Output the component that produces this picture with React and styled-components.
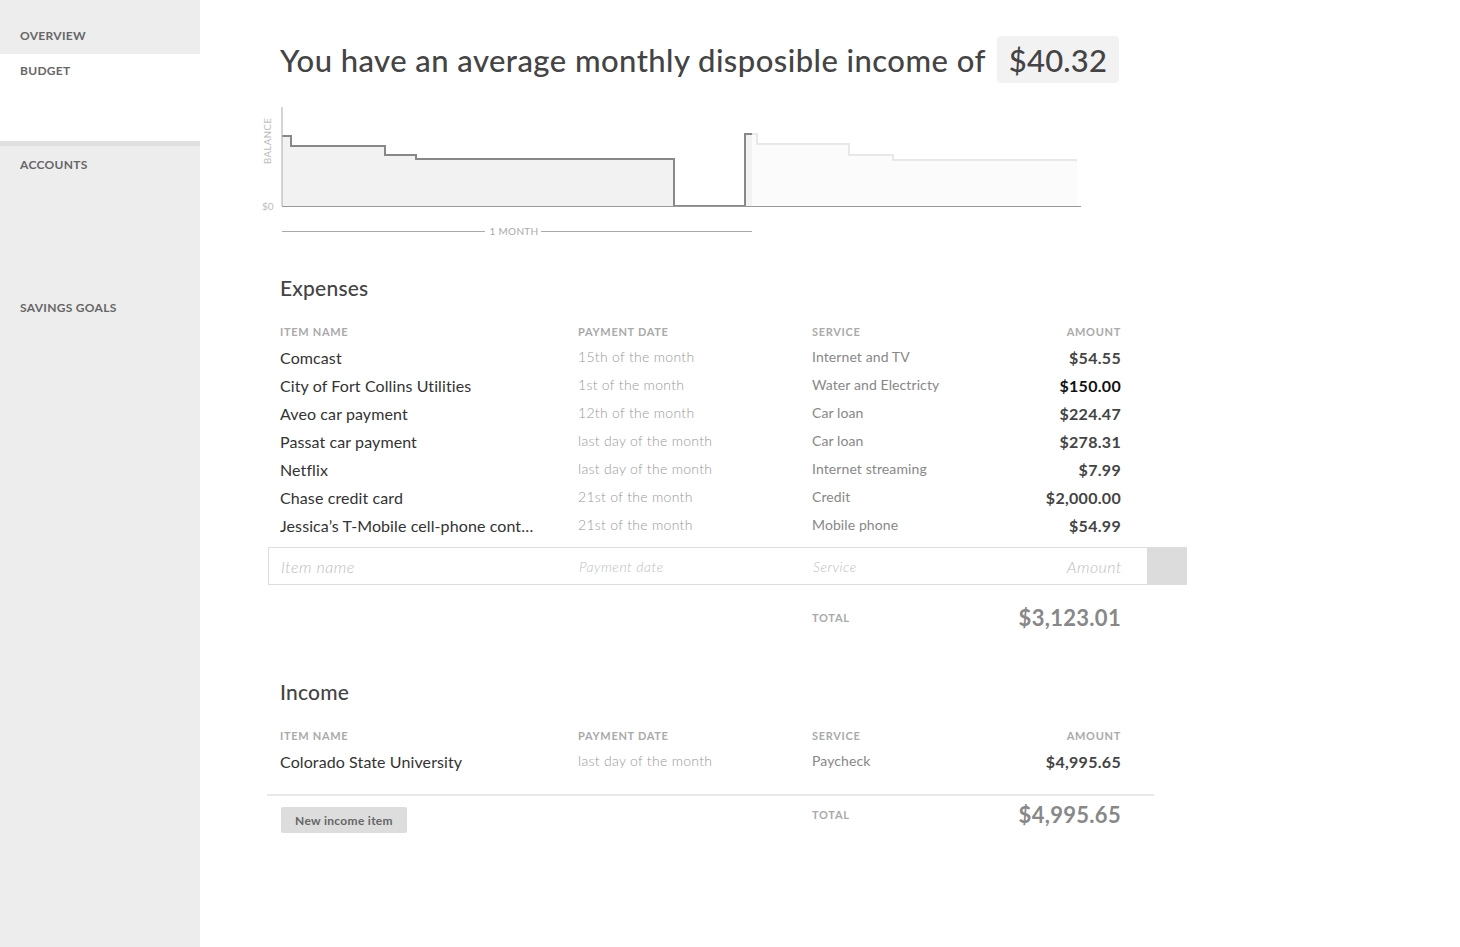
import React from "react";
import styled, { createGlobalStyle } from "styled-components";

const GlobalStyle = createGlobalStyle`
  html, body {
    margin: 0;
    padding: 0;
    background: #fff;
    font-family: Lato, "Open Sans", "Liberation Sans", sans-serif;
    color: #444;
  }
`;

const Page = styled.div`
  display: flex;
  min-height: 947px;
`;

const Sidebar = styled.nav`
  width: 200px;
  flex-shrink: 0;
  background: #ededed;
  display: flex;
  flex-direction: column;
`;

const NavItem = styled.div`
  padding: ${(p) => p.$pad || "0 20px"};
  height: ${(p) => p.$height || "auto"};
  background: ${(p) => (p.$active ? "#fff" : "transparent")};
  border-bottom: ${(p) => (p.$active ? "5px solid #e0e0e0" : "none")};
  font-size: 12px;
  font-weight: 700;
  letter-spacing: 0.3px;
  color: #666;
  box-sizing: border-box;
`;

const Main = styled.main`
  flex: 1;
  padding: 36px 0 0 80px;
`;

const Header = styled.div`
  display: flex;
  align-items: center;
  gap: 11px;
  height: 47px;
`;

const Title = styled.h1`
  margin: 0;
  font-size: 31px;
  font-weight: 500;
  color: #444;
  letter-spacing: 0.45px;
`;

const Figure = styled.div`
  background: #f2f2f2;
  border-radius: 4px;
  padding: 0 12px;
  height: 47px;
  display: flex;
  align-items: center;
  font-size: 31px;
  font-weight: 500;
  color: #444;
  letter-spacing: 0.2px;
`;

const Chart = styled.svg`
  display: block;
  margin: 17px 0 0 -30px;
`;

const Section = styled.section`
  margin-top: ${(p) => p.$top || "0"};
  width: 841px;
`;

const SectionTitle = styled.h2`
  margin: 0 0 18px;
  font-size: 21px;
  font-weight: 500;
  color: #444;
  line-height: 24px;
  letter-spacing: 0.2px;
`;

const Row = styled.div`
  display: grid;
  grid-template-columns: 298px 234px 1fr 140px;
  align-items: center;
  height: ${(p) => p.$h || "28px"};
`;

const HeadCell = styled.div`
  font-size: 11px;
  font-weight: 700;
  color: #aaa;
  letter-spacing: 0.7px;
  text-align: ${(p) => (p.$right ? "right" : "left")};
`;

const NameCell = styled.div`
  font-size: 16px;
  color: #333;
  letter-spacing: 0.1px;
  white-space: nowrap;
  overflow: hidden;
  text-overflow: ellipsis;
  padding-right: 44px;
  margin-top: -2px;
`;

const DateCell = styled.div`
  font-size: 14px;
  font-weight: 300;
  color: #999;
  letter-spacing: 0.3px;
  margin-top: -4px;
`;

const ServiceCell = styled.div`
  font-size: 14px;
  color: #888;
  font-weight: 400;
  letter-spacing: 0.1px;
  margin-top: -3px;
`;

const AmountCell = styled.div`
  font-size: 16px;
  font-weight: 700;
  letter-spacing: 0.3px;
  color: ${(p) => (p.$strong ? "#111" : "#444")};
  text-align: right;
  margin-top: -1px;
`;

const InputRow = styled.div`
  display: flex;
  margin: 7px 0 0 -12px;
  width: 919px;
  height: 38px;
  border: 1px solid #ddd;
  box-sizing: border-box;
`;

const InputGrid = styled.div`
  flex: 1;
  display: grid;
  grid-template-columns: 298px 234px 1fr 140px;
  align-items: center;
  padding-left: 12px;
  padding-right: 25px;
`;

const Placeholder = styled.div`
  font-style: italic;
  font-weight: 300;
  color: #bdbdbd;
  font-size: ${(p) => p.$size || "14px"};
  letter-spacing: 0.5px;
  text-align: ${(p) => (p.$right ? "right" : "left")};
`;

const AddSquare = styled.div`
  width: 39px;
  background: #dcdcdc;
`;

const TotalRow = styled.div`
  display: grid;
  grid-template-columns: 298px 234px 1fr 140px;
  align-items: center;
  height: ${(p) => p.$h || "40px"};
  margin-top: ${(p) => p.$top || "0"};
`;

const TotalLabel = styled.div`
  grid-column: 3;
  font-size: 11px;
  font-weight: 700;
  color: #aaa;
  letter-spacing: 0.7px;
`;

const TotalAmount = styled.div`
  font-size: 22px;
  font-weight: 700;
  color: #888;
  letter-spacing: 0.3px;
  text-align: right;
`;

const Divider = styled.div`
  margin: 18px 0 0 -13px;
  width: 887px;
  height: 2px;
  background: #e8e8e8;
`;

const NewButton = styled.button`
  grid-column: 1;
  grid-row: 1;
  justify-self: start;
  align-self: start;
  margin: 11px 0 0 1px;
  height: 26px;
  width: 126px;
  padding: 0;
  border: none;
  border-radius: 2px;
  background: #dddddd;
  font-family: inherit;
  font-size: 12px;
  font-weight: 700;
  letter-spacing: 0.3px;
  color: #666;
`;

const expenses = [
  ["Comcast", "15th of the month", "Internet and TV", "$54.55"],
  ["City of Fort Collins Utilities", "1st of the month", "Water and Electricty", "$150.00", true],
  ["Aveo car payment", "12th of the month", "Car loan", "$224.47"],
  ["Passat car payment", "last day of the month", "Car loan", "$278.31"],
  ["Netflix", "last day of the month", "Internet streaming", "$7.99"],
  ["Chase credit card", "21st of the month", "Credit", "$2,000.00"],
  ["Jessica’s T-Mobile cell-phone contract", "21st of the month", "Mobile phone", "$54.99"],
];

const BalanceChart = () => (
  <Chart width="840" height="140" viewBox="250 100 840 140">
    <path
      d="M752 206 V134 H757 V144 H849 V155 H893 V160 H1077 V206 Z"
      fill="#fbfbfb"
    />
    <path
      d="M752 134 H757 V144 H849 V155 H893 V160 H1077"
      fill="none"
      stroke="#e8e8e8"
      strokeWidth="2"
    />
    <path
      d="M282 206 V136 H291 V146 H385 V155 H416 V159 H674 V206 H745 V134 H752 V206 Z"
      fill="#f2f2f2"
    />
    <path
      d="M282 136 H291 V146 H385 V155 H416 V159 H674 V206 H745 V134 H752"
      fill="none"
      stroke="#888"
      strokeWidth="2"
    />
    <line x1="282" y1="107" x2="282" y2="206" stroke="#aaa" strokeWidth="1" />
    <line x1="282" y1="206.5" x2="1081" y2="206.5" stroke="#999" strokeWidth="1" />
    <text
      x="0"
      y="0"
      transform="translate(271 164) rotate(-90)"
      fontSize="9.5"
      fill="#bbb"
      fontFamily="Lato, sans-serif"
      letterSpacing="0.5"
    >
      BALANCE
    </text>
    <text x="262" y="210" fontSize="10" fill="#bbb" fontFamily="Lato, sans-serif">
      $0
    </text>
    <line x1="282" y1="231.5" x2="485" y2="231.5" stroke="#aaa" strokeWidth="1" />
    <line x1="541" y1="231.5" x2="752" y2="231.5" stroke="#aaa" strokeWidth="1" />
    <text
      x="514"
      y="235"
      fontSize="10"
      fill="#aaa"
      textAnchor="middle"
      fontFamily="Lato, sans-serif"
      letterSpacing="0.3"
    >
      1 MONTH
    </text>
  </Chart>
);

const ColumnHeads = () => (
  <Row $h="26px">
    <HeadCell>ITEM NAME</HeadCell>
    <HeadCell>PAYMENT DATE</HeadCell>
    <HeadCell>SERVICE</HeadCell>
    <HeadCell $right>AMOUNT</HeadCell>
  </Row>
);

export default function App() {
  return (
    <>
      <GlobalStyle />
      <Page>
        <Sidebar>
          <NavItem $pad="28px 20px 0" $height="54px">OVERVIEW</NavItem>
          <NavItem $active $pad="9px 20px 0" $height="92px">BUDGET</NavItem>
          <NavItem $pad="11px 20px 0" $height="154px">ACCOUNTS</NavItem>
          <NavItem $pad="0 20px">SAVINGS GOALS</NavItem>
        </Sidebar>
        <Main>
          <Header>
            <Title>You have an average monthly disposible income of</Title>
            <Figure>$40.32</Figure>
          </Header>
          <BalanceChart />

          <Section $top="36px">
            <SectionTitle>Expenses</SectionTitle>
            <ColumnHeads />
            {expenses.map(([name, date, service, amount, strong]) => (
              <Row key={name}>
                <NameCell>{name}</NameCell>
                <DateCell>{date}</DateCell>
                <ServiceCell>{service}</ServiceCell>
                <AmountCell $strong={strong}>{amount}</AmountCell>
              </Row>
            ))}
            <InputRow>
              <InputGrid>
                <Placeholder $size="16px">Item name</Placeholder>
                <Placeholder>Payment date</Placeholder>
                <Placeholder>Service</Placeholder>
                <Placeholder $size="16px" $right>Amount</Placeholder>
              </InputGrid>
              <AddSquare />
            </InputRow>
            <TotalRow $top="12px">
              <TotalLabel>TOTAL</TotalLabel>
              <TotalAmount>$3,123.01</TotalAmount>
            </TotalRow>
          </Section>

          <Section $top="43px">
            <SectionTitle>Income</SectionTitle>
            <ColumnHeads />
            <Row>
              <NameCell>Colorado State University</NameCell>
              <DateCell>last day of the month</DateCell>
              <ServiceCell>Paycheck</ServiceCell>
              <AmountCell>$4,995.65</AmountCell>
            </Row>
            <Divider />
            <TotalRow $h="36px">
              <NewButton>New income item</NewButton>
              <TotalLabel>TOTAL</TotalLabel>
              <TotalAmount>$4,995.65</TotalAmount>
            </TotalRow>
          </Section>
        </Main>
      </Page>
    </>
  );
}
